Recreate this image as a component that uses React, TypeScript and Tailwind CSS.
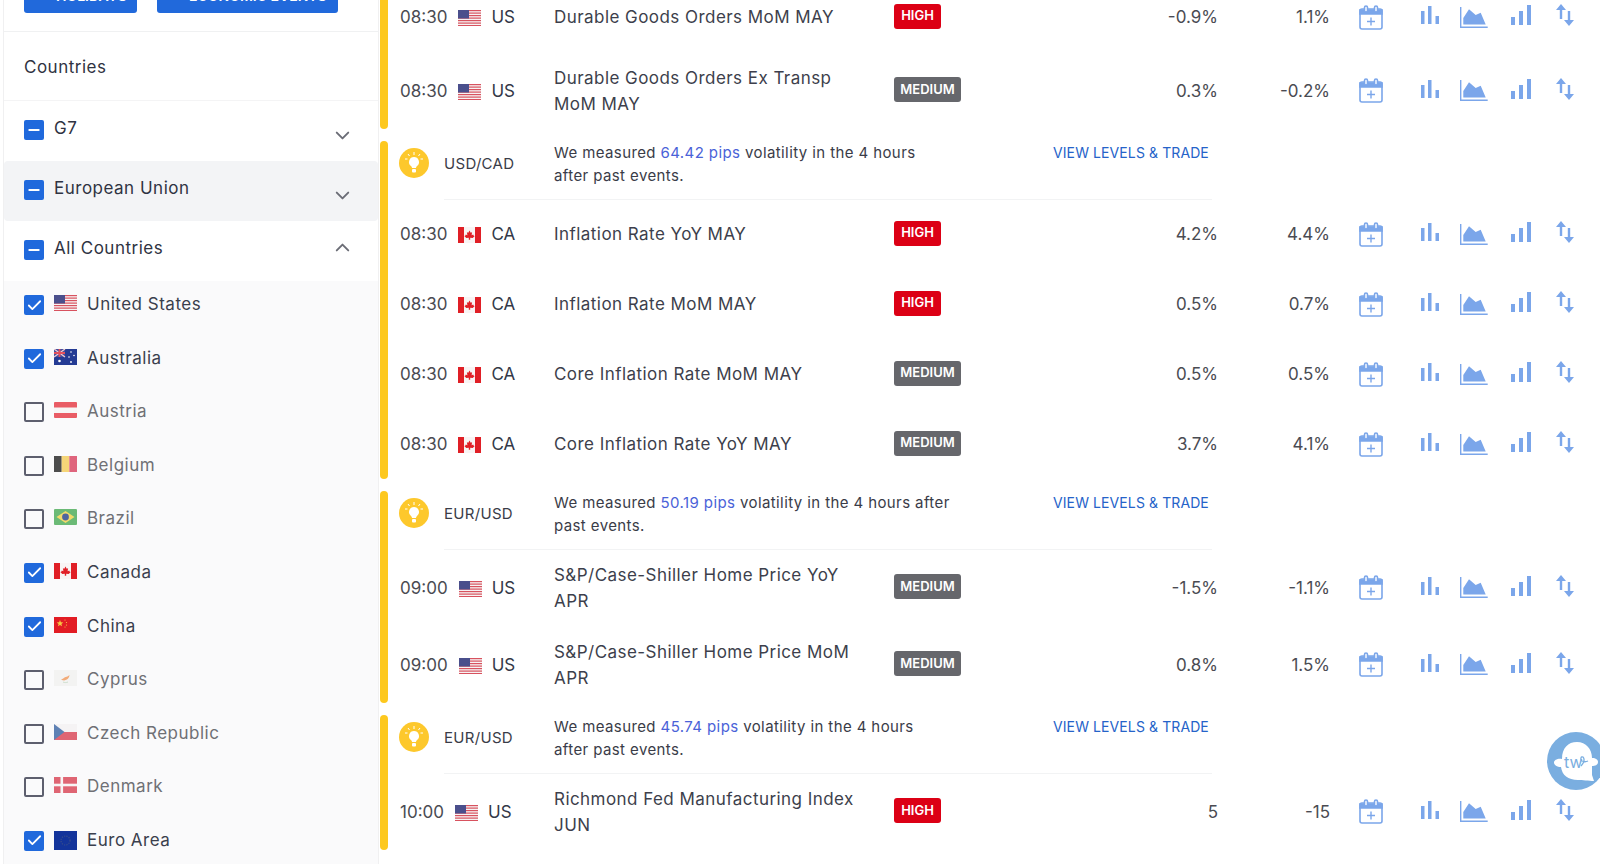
import React from "react";
import { Check, ChevronDown, ChevronUp, Minus } from "lucide-react";

type Code = "US" | "CA" | "AU" | "AT" | "BE" | "BR" | "CN" | "CY" | "CZ" | "DK" | "EU";

type EventRow = {
  time: string;
  code: "US" | "CA";
  title: string;
  impact: "HIGH" | "MEDIUM";
  actual: string;
  forecast: string;
};

type Insight = { pair: string; pips: string; before: string; after: string };

const countries: { name: string; code: Code; checked: boolean }[] = [
  { name: "United States", code: "US", checked: true },
  { name: "Australia", code: "AU", checked: true },
  { name: "Austria", code: "AT", checked: false },
  { name: "Belgium", code: "BE", checked: false },
  { name: "Brazil", code: "BR", checked: false },
  { name: "Canada", code: "CA", checked: true },
  { name: "China", code: "CN", checked: true },
  { name: "Cyprus", code: "CY", checked: false },
  { name: "Czech Republic", code: "CZ", checked: false },
  { name: "Denmark", code: "DK", checked: false },
  { name: "Euro Area", code: "EU", checked: true },
];

const groups: { insight?: Insight; rows: EventRow[] }[] = [
  {
    rows: [
      { time: "08:30", code: "US", title: "Durable Goods Orders MoM MAY", impact: "HIGH", actual: "-0.9%", forecast: "1.1%" },
      { time: "08:30", code: "US", title: "Durable Goods Orders Ex Transp\nMoM MAY", impact: "MEDIUM", actual: "0.3%", forecast: "-0.2%" },
    ],
  },
  {
    insight: { pair: "USD/CAD", pips: "64.42 pips", before: "We measured", after: " volatility in the 4 hours\nafter past events." },
    rows: [
      { time: "08:30", code: "CA", title: "Inflation Rate YoY MAY", impact: "HIGH", actual: "4.2%", forecast: "4.4%" },
      { time: "08:30", code: "CA", title: "Inflation Rate MoM MAY", impact: "HIGH", actual: "0.5%", forecast: "0.7%" },
      { time: "08:30", code: "CA", title: "Core Inflation Rate MoM MAY", impact: "MEDIUM", actual: "0.5%", forecast: "0.5%" },
      { time: "08:30", code: "CA", title: "Core Inflation Rate YoY MAY", impact: "MEDIUM", actual: "3.7%", forecast: "4.1%" },
    ],
  },
  {
    insight: { pair: "EUR/USD", pips: "50.19 pips", before: "We measured", after: " volatility in the 4 hours after\npast events." },
    rows: [
      { time: "09:00", code: "US", title: "S&P/Case-Shiller Home Price YoY\nAPR", impact: "MEDIUM", actual: "-1.5%", forecast: "-1.1%" },
      { time: "09:00", code: "US", title: "S&P/Case-Shiller Home Price MoM\nAPR", impact: "MEDIUM", actual: "0.8%", forecast: "1.5%" },
    ],
  },
  {
    insight: { pair: "EUR/USD", pips: "45.74 pips", before: "We measured", after: " volatility in the 4 hours\nafter past events." },
    rows: [
      { time: "10:00", code: "US", title: "Richmond Fed Manufacturing Index\nJUN", impact: "HIGH", actual: "5", forecast: "-15" },
    ],
  },
];

const Flag = ({ code }: { code: Code }) => {
  const box = "block w-[23px] h-[16px] shrink-0";
  switch (code) {
    case "US":
      return (
        <svg className={box} viewBox="0 0 23 16">
          <rect width="23" height="16" fill="#f7f3f3" />
          {[0, 2.5, 5, 7.5, 10, 12.5, 15].map((y) => (
            <rect key={y} y={y} width="23" height="1.2" fill="#d8525f" />
          ))}
          <rect width="11" height="8.5" fill="#4a4f8c" />
        </svg>
      );
    case "CA":
      return (
        <svg className={box} viewBox="0 0 23 16">
          <rect width="23" height="16" fill="#f8f4f4" />
          <rect width="6" height="16" fill="#e01f26" />
          <rect x="17" width="6" height="16" fill="#e01f26" />
          <path d="M11.5 3.5l1.2 2.2 1.4-.5-.5 3 1.6-.6.5 1.2 1 .2-2 2-2.5-.3v2h-1.4v-2l-2.5.3-2-2 1-.2.5-1.2 1.6.6-.5-3 1.4.5z" fill="#e01f26" />
        </svg>
      );
    case "AU":
      return (
        <svg className={box} viewBox="0 0 23 16">
          <rect width="23" height="16" fill="#243b94" />
          <rect width="11" height="8" fill="#3f4f9f" />
          <path d="M0 0l11 8M11 0L0 8" stroke="#f1c9cf" strokeWidth="1.3" />
          <path d="M5.5 0v8M0 4h11" stroke="#e0505c" strokeWidth="1.8" />
          <circle cx="5.5" cy="12" r="1.3" fill="#fff" />
          <circle cx="17" cy="3" r=".8" fill="#fff" />
          <circle cx="20" cy="6.5" r=".8" fill="#fff" />
          <circle cx="15" cy="8" r=".8" fill="#fff" />
          <circle cx="17" cy="13" r=".9" fill="#fff" />
        </svg>
      );
    case "AT":
      return (
        <svg className={box} viewBox="0 0 23 16">
          <rect width="23" height="16" rx="1" fill="#e84c55" />
          <rect y="5.5" width="23" height="5.5" fill="#f7f5f5" />
        </svg>
      );
    case "BE":
      return (
        <svg className={box} viewBox="0 0 23 16">
          <rect width="7.7" height="16" fill="#3a3a3a" />
          <rect x="7.7" width="7.6" height="16" fill="#f5d16a" />
          <rect x="15.3" width="7.7" height="16" fill="#dd5570" />
        </svg>
      );
    case "BR":
      return (
        <svg className={box} viewBox="0 0 23 16">
          <rect width="23" height="16" rx="1" fill="#5cb468" />
          <path d="M11.5 2L20.5 8 11.5 14 2.5 8z" fill="#f2d75c" />
          <circle cx="11.5" cy="8" r="3.4" fill="#3d5596" />
        </svg>
      );
    case "CN":
      return (
        <svg className={box} viewBox="0 0 23 16">
          <rect width="23" height="16" fill="#e21c24" />
          <path d="M6 3l.9 2.3 2.4.1-1.9 1.5.7 2.4L6 8l-2.1 1.3.7-2.4-1.9-1.5 2.4-.1z" fill="#f7c843" />
          <circle cx="11" cy="3" r=".6" fill="#f7c843" />
          <circle cx="12.5" cy="5.5" r=".6" fill="#f7c843" />
          <circle cx="12.5" cy="8" r=".6" fill="#f7c843" />
          <circle cx="11" cy="10" r=".6" fill="#f7c843" />
        </svg>
      );
    case "CY":
      return (
        <svg className={box} viewBox="0 0 23 16">
          <rect width="23" height="16" fill="#f3f3f2" />
          <path d="M7 9.5c2-.3 3-2.3 5.5-2.8 1.2-.2 2.2-.9 3-1.7-.2 2-1.2 3.6-2.6 4.6-1.7 1.1-3.8 1-5.9-.1z" fill="#f2a36b" />
          <path d="M9 12c1.5.7 3.5.7 5 0" stroke="#c9dcc9" strokeWidth="1" fill="none" />
        </svg>
      );
    case "CZ":
      return (
        <svg className={box} viewBox="0 0 23 16">
          <rect width="23" height="8" fill="#f5f3f4" />
          <rect y="8" width="23" height="8" fill="#dd5565" />
          <path d="M0 0l10.5 8L0 16z" fill="#4e74ad" />
        </svg>
      );
    case "DK":
      return (
        <svg className={box} viewBox="0 0 23 16">
          <rect width="23" height="16" fill="#dd5565" />
          <rect x="6.5" width="2.6" height="16" fill="#f7f5f5" />
          <rect y="6.7" width="23" height="2.6" fill="#f7f5f5" />
        </svg>
      );
    case "EU":
      return (
        <svg className="block w-[23px] h-[19px] shrink-0" viewBox="0 0 23 19">
          <rect width="23" height="19" fill="#13349b" />
          <circle cx="11.5" cy="9.5" r="4.5" fill="none" stroke="#3a4f8a" strokeWidth="1.2" strokeDasharray="1.2 1.2" />
        </svg>
      );
  }
};

const Box = ({ checked, partial }: { checked?: boolean; partial?: boolean }) =>
  checked || partial ? (
    <span className="flex w-5 h-5 shrink-0 items-center justify-center rounded-[2px] bg-[#2069dc] text-white">
      {partial ? <Minus size={16} strokeWidth={3} /> : <Check size={17} strokeWidth={2.5} />}
    </span>
  ) : (
    <span className="block w-5 h-5 shrink-0 rounded-[2px] border-2 border-[#5d5f6e]" />
  );

const Group = ({ name, open, active, chevronTop }: { name: string; open?: boolean; active?: boolean; chevronTop: string }) => (
  <div className={`flex h-[60px] pl-[20px] pr-[24px] rounded-sm ${active ? "bg-[#f3f4f6]" : "bg-white"}`}>
    <div className="pt-[19px]">
      <Box partial />
    </div>
    <span className="ml-2.5 pt-[15px] text-[17px] leading-6 text-[#2f3342] tracking-[0.5px]">{name}</span>
    <span className={`ml-auto text-[#6b6d76] ${chevronTop}`}>
      {open ? <ChevronUp size={23} strokeWidth={2} /> : <ChevronDown size={23} strokeWidth={2} />}
    </span>
  </div>
);

const Sidebar = () => (
  <aside className="ml-[3px] w-[376px] shrink-0 border-x border-[#f0f0f1] -mt-[23px]">
    <div className="flex gap-5 pl-[20px] h-[55px] border-b border-[#f0f1f2] overflow-hidden">
      <span className="flex h-9 w-[113px] items-center gap-2 rounded-[3px] bg-[#2169db] pl-2.5 text-[14px] font-semibold text-white">
        <Check size={14} strokeWidth={3} />
        HOLIDAYS
      </span>
      <span className="flex h-9 w-[181px] items-center gap-2 rounded-[3px] bg-[#2169db] pl-2.5 text-[14px] font-semibold text-white">
        <Check size={14} strokeWidth={3} />
        ECONOMIC EVENTS
      </span>
    </div>
    <div className="flex h-[69px] items-center pl-[20px] pt-1 text-[17px] tracking-[0.5px] text-[#2f3342] border-b border-[#f4f4f5]">Countries</div>
    <Group name="G7" chevronTop="pt-[23px]" />
    <Group name="European Union" active chevronTop="pt-[23px]" />
    <Group name="All Countries" open chevronTop="pt-[15px]" />
    <div className="bg-[#fafafb]">
      {countries.map((c) => (
        <div key={c.name} className="flex h-[53.6px] items-start pl-[20px] pt-[14px]">
          <Box checked={c.checked} />
          <span className={`ml-2.5 ${c.checked ? "" : "opacity-90"}`}>
            <Flag code={c.code} />
          </span>
          <span className={`ml-2.5 -mt-[3px] text-[17px] leading-6 tracking-[0.5px] ${c.checked ? "text-[#3a3f4d]" : "text-[#6f7075]"}`}>{c.name}</span>
        </div>
      ))}
    </div>
  </aside>
);

const Icons = () => (
  <>
    <span className="flex w-[82px] justify-center">
      <svg width="24" height="25" viewBox="0 0 24 25" fill="none" stroke="#7ba6ea" strokeWidth="1.6">
        <rect x="1" y="4" width="22" height="20" rx="2" />
        <path d="M1 5h22v4H1z" fill="#7ba6ea" />
        <rect x="5.5" y="1" width="3" height="6" rx="1.5" fill="#fff" />
        <rect x="15.5" y="1" width="3" height="6" rx="1.5" fill="#fff" />
        <path d="M12 12.5v8M8 16.5h8" strokeWidth="1.4" />
      </svg>
    </span>
    <span className="flex w-9 justify-center">
      <svg width="18" height="18" viewBox="0 0 18 18" fill="#7ba6ea" className="-mt-1">
        <rect x="0" y="5" width="3.5" height="13" />
        <rect x="7" y="0" width="3.5" height="18" />
        <rect x="14.5" y="10" width="3.5" height="8" />
      </svg>
    </span>
    <span className="flex w-[52px] justify-center">
      <svg width="28" height="21" viewBox="0 0 28 21" fill="none">
        <path d="M3.3 17.5V11L9 2.3 15.7 8l5-2.3 5 11.8z" fill="#7ba6ea" />
        <path d="M.7 0v20.2h27" stroke="#7ba6ea" strokeWidth="1.4" />
      </svg>
    </span>
    <span className="flex w-[42px] justify-center">
      <svg width="20" height="20" viewBox="0 0 20 20" fill="#7ba6ea" className="-mt-1">
        <rect x="0" y="12" width="4" height="8" />
        <rect x="8" y="6" width="4" height="14" />
        <rect x="16" y="0" width="4" height="20" />
      </svg>
    </span>
    <span className="flex w-[46px] justify-center">
      <svg width="18" height="22" viewBox="0 0 18 22" fill="#7ba6ea" className="-mt-1">
        <path d="M5 0l5 6H6.2v9H3.8V6H0z" />
        <path d="M13 22l5-6h-3.8V7h-2.4v9H8z" />
      </svg>
    </span>
  </>
);

const Row = ({ row }: { row: EventRow }) => (
  <div className={`flex items-center text-[17px] text-[#4a4b52] ${row.title.includes("\n") ? "h-[77px]" : "h-[70px]"}`}>
    <div className="flex w-[166px] items-center pl-3 pt-[2px]">
      <span>{row.time}</span>
      <span className="ml-[11px]">
        <Flag code={row.code} />
      </span>
      <span className="ml-2.5 text-[#333847]">{row.code}</span>
    </div>
    <div className="w-[340px] whitespace-pre-line text-[17px] leading-[26px] tracking-[0.45px] text-[#3d3f4c]">{row.title}</div>
    <div className="flex w-[120px] -mt-[2px]">
      {row.impact === "HIGH" ? (
        <span className="inline-flex h-[25px] w-[47px] items-center justify-center rounded-[3px] bg-[#dc0015] text-[13px] font-semibold text-white">HIGH</span>
      ) : (
        <span className="inline-flex h-[25px] w-[67px] items-center justify-center rounded-[3px] bg-[#66676c] text-[13px] font-semibold text-white">MEDIUM</span>
      )}
    </div>
    <div className="w-[204px] pt-[2px] text-right">{row.actual}</div>
    <div className="w-[112px] pt-[2px] text-right">{row.forecast}</div>
    <Icons />
  </div>
);

const InsightRow = ({ insight }: { insight: Insight }) => (
  <div className="flex h-[58px] items-start pl-[11px]">
    <span className="mt-[7px] flex h-[30px] w-[30px] shrink-0 items-center justify-center rounded-full bg-[#fdc82c]">
      <svg width="18" height="22" viewBox="0 0 18 22" fill="#fff">
        <path d="M9 5a5 5 0 0 0-3 9c.7.6 1 1.2 1 2h4c0-.8.3-1.4 1-2a5 5 0 0 0-3-9z" />
        <rect x="7" y="17" width="4" height="3.5" rx="1" />
        <path d="M9 0v3M3 2l1.5 2M15 2l-1.500 2M0 7h2.500M18 7h-2.500" stroke="#fff" strokeWidth="1" />
      </svg>
    </span>
    <div className="ml-[15px] flex h-[59px] flex-1 border-b border-[#f2f3f4] mr-[388px]">
      <span className="w-[110px] pt-[12px] text-[15px] tracking-[0.3px] text-[#3a3c48]">{insight.pair}</span>
      <p className="w-[499px] whitespace-pre-line text-[15px] leading-[23px] tracking-[0.4px] text-[#3a3c48]">
        {insight.before} <span className="text-[#4a62d8]">{insight.pips}</span>
        {insight.after}
      </p>
      <span className="text-[14px] leading-[23px] tracking-[0.1px] text-[#2563c9]">VIEW LEVELS &amp; TRADE</span>
    </div>
  </div>
);

export default function App() {
  return (
    <div className="relative h-[864px] w-[1600px] overflow-hidden bg-white font-['Inter',sans-serif]">
      <div className="flex">
        <Sidebar />
        <main className="-mt-[18px] ml-px flex flex-1 flex-col gap-3">
          {groups.map((g, i) => (
            <section key={i} className="flex">
              <div className="w-2 shrink-0 rounded-full bg-[#fdc81e]" />
              <div className="flex-1">
                {g.insight && <InsightRow insight={g.insight} />}
                {g.rows.map((r) => (
                  <Row key={r.title} row={r} />
                ))}
              </div>
            </section>
          ))}
        </main>
      </div>
      <svg className="absolute left-[1546px] top-[731px]" width="60" height="60" viewBox="0 0 60 60">
        <circle cx="30" cy="30" r="29" fill="#7aaee0" />
        <path d="M16 28C16 17 22 11 31 11C40 11 46 18 46 27C50 27 52 29 52 31C52 34 49 35 46 35L46 44L48 50C43 50 36 49 32 49C22 49 16 44 15 36C11 36 8 34 8 31.5C8 29 12 27 16 28Z" fill="#fff" />
        <text x="18" y="37" fontSize="16" fill="#7aaee0" fontFamily="Inter, sans-serif">tw</text>
        <path d="M35 35c3-3 4-7 2-9-2-1-3 2-1 4 2 1 4 1 6 0" fill="none" stroke="#7aaee0" strokeWidth="1.3" />
      </svg>
    </div>
  );
}
